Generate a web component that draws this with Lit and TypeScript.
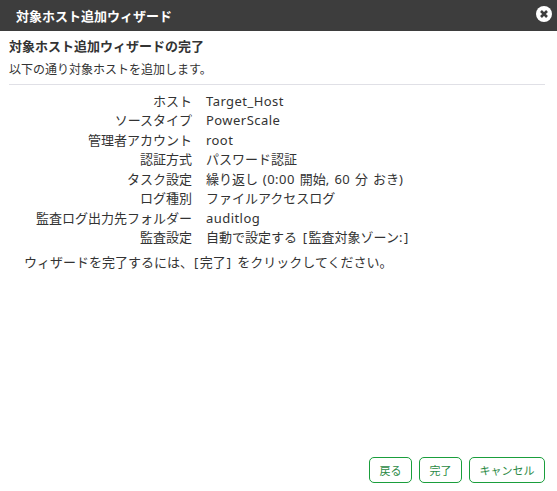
import { LitElement, html, css } from "lit";
import { customElement } from "lit/decorators.js";

const rows: [string, string][] = [
  ["ホスト", "Target_Host"],
  ["ソースタイプ", "PowerScale"],
  ["管理者アカウント", "root"],
  ["認証方式", "パスワード認証"],
  ["タスク設定", "繰り返し (0:00 開始, 60 分 おき)"],
  ["ログ種別", "ファイルアクセスログ"],
  ["監査ログ出力先フォルダー", "auditlog"],
  ["監査設定", "自動で設定する [監査対象ゾーン:]"],
];

/* Latin runs in the reference are tracked wider than the Japanese around them;
   square brackets sit in a slightly wider box still. */
const latin = (text: string) =>
  text.split(/([\[\]])/).map((part, i) =>
    i % 2 ? html`<span class="bracket">${part}</span>` : part
  );
const mixed = (text: string) =>
  text.split(/([\x20-\x7e]+)/).map((part, i) =>
    i % 2 ? html`<span class="latin">${latin(part)}</span>` : part
  );

@customElement("app-root")
export class AppRoot extends LitElement {
  static styles = css`
    :host {
      display: flex;
      flex-direction: column;
      width: 557px;
      height: 491px;
      background: #fff;
      color: #333;
      font-family: "Noto Sans", "Noto Sans CJK JP", sans-serif;
      font-size: 13px;
      overflow: hidden;
    }
    .latin { letter-spacing: 0.45px; word-spacing: 1px; }
    .bracket { padding: 0 1px; }
    .titlebar {
      height: 31px;
      flex: none;
      background: #3d3d3d;
      color: #fff;
      font-weight: 700;
      display: flex;
      align-items: center;
      justify-content: space-between;
      padding: 0 5px 0 16px;
    }
    .close { width: 16px; height: 16px; display: block; margin-top: -3px; }
    .body { flex: 1; display: flex; flex-direction: column; padding: 0 12px 0 9px; }
    h1 { font-size: 13px; font-weight: 700; margin: 6px 0 0; line-height: 18px; }
    .sub { font-size: 12px; line-height: 16px; margin-top: 7px; padding-bottom: 6px; border-bottom: 1px solid #e0e0e6; margin-bottom: 6.5px; }
    .grid { display: grid; grid-template-columns: 183px 1fr; column-gap: 14px; grid-auto-rows: 19.5px; line-height: 19.5px; }
    .k { text-align: right; white-space: nowrap; }
    .v { white-space: nowrap; }
    .note { margin: 4.5px 0 0 15px; line-height: 20px; }
    .actions { margin-top: auto; display: flex; justify-content: flex-end; gap: 7px; padding-bottom: 8px; }
    button {
      height: 26px;
      box-sizing: border-box;
      border: 1px solid #1a9e3c;
      border-radius: 5px;
      background: #fff;
      color: #2b8a45;
      font: inherit;
      font-size: 11px;
      padding: 0;
    }
    .b1 { width: 43px; }
    .b2 { width: 43px; }
    .b3 { width: 76px; }
  `;

  render() {
    return html`
      <div class="titlebar">
        <span>対象ホスト追加ウィザード</span>
        <svg class="close" viewBox="0 0 16 16">
          <circle cx="8" cy="8" r="8" fill="#fff" />
          <path d="M5 5l6 6M11 5l-6 6" stroke="#3d3d3d" stroke-width="2.6" fill="none" />
        </svg>
      </div>
      <div class="body">
        <h1>対象ホスト追加ウィザードの完了</h1>
        <div class="sub">以下の通り対象ホストを追加します。</div>
        <div class="grid">
          ${rows.map(([k, v]) => html`<div class="k">${k}</div><div class="v">${mixed(v)}</div>`)}
        </div>
        <div class="note">${mixed("ウィザードを完了するには、[完了] をクリックしてください。")}</div>
        <div class="actions">
          <button class="b1">戻る</button>
          <button class="b2">完了</button>
          <button class="b3">キャンセル</button>
        </div>
      </div>
    `;
  }
}
